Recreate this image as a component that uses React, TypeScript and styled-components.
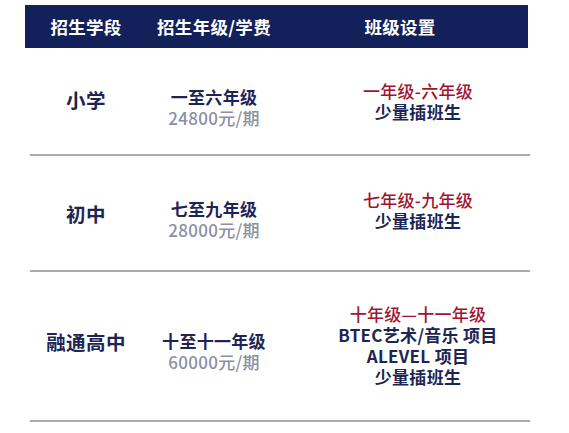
import React from 'react';
import styled, { createGlobalStyle } from 'styled-components';

const colors = {
    navy: '#12215a',
    text: '#1c2553',
    red: '#a01432',
    gray: '#8a8fa5',
    rule: '#a9a9b0',
};

const GlobalStyle = createGlobalStyle`
    body {
        margin: 0;
        background: #ffffff;
        font-family: "Noto Sans CJK SC", "Noto Sans", sans-serif;
    }
`;

const Page = styled.div`
    width: 569px;
    height: 433px;
    padding-top: 5px;
    box-sizing: border-box;
    overflow: hidden;
`;

const grid = `
    display: grid;
    grid-template-columns: 122px 134px 247px;
    margin-left: 25px;
    width: 503px;
`;

const HeaderBar = styled.div`
    ${grid}
    height: 43px;
    align-items: center;
    background: ${colors.navy};
    color: #ffffff;
    font-size: 17.5px;
    letter-spacing: 0.3px;
    font-weight: 700;
`;

const HeaderCell = styled.div<{ $trim?: number }>`
    text-align: center;
    padding-right: ${p => p.$trim || 0}px;
    padding-bottom: 1px;
`;

const Row = styled.div<{ $height: number }>`
    ${grid}
    height: ${p => p.$height}px;
    align-items: center;
`;

const Divider = styled.div`
    margin-left: 30px;
    width: 500px;
    height: 2px;
    background: ${colors.rule};
`;

const StageCell = styled.div<{ $lift: number }>`
    text-align: center;
    font-size: 19.5px;
    letter-spacing: 0.4px;
    font-weight: 700;
    color: ${colors.text};
    padding-bottom: ${p => p.$lift}px;
`;

const GradeCell = styled.div<{ $drop: number }>`
    display: flex;
    flex-direction: column;
    align-items: center;
    padding-top: ${p => p.$drop}px;
    font-size: 17px;
    letter-spacing: 0.3px;
    line-height: 21px;
    font-weight: 700;
    color: ${colors.text};
`;

const Fee = styled.span`
    color: ${colors.gray};
    font-weight: 500;
`;

const ClassCell = styled.div<{ $lift: number }>`
    display: flex;
    flex-direction: column;
    align-items: center;
    padding-left: 27px;
    padding-bottom: ${p => p.$lift}px;
    font-size: 17px;
    letter-spacing: 0.3px;
    line-height: 21px;
    font-weight: 700;
    color: ${colors.text};
`;

const RedLine = styled.span`
    color: ${colors.red};
    font-weight: 500;
`;

type Stage = {
    name: string;
    grades: string;
    fee: string;
    range: string;
    extra: string[];
    height: number;
    stageLift: number;
    gradeDrop: number;
    classLift: number;
};

const stages: Stage[] = [
    {
        name: '小学',
        grades: '一至六年级',
        fee: '24800元/期',
        range: '一年级-六年级',
        extra: ['少量插班生'],
        height: 106,
        stageLift: 4,
        gradeDrop: 12,
        classLift: 0,
    },
    {
        name: '初中',
        grades: '七至九年级',
        fee: '28000元/期',
        range: '七年级-九年级',
        extra: ['少量插班生'],
        height: 114,
        stageLift: 0,
        gradeDrop: 12,
        classLift: 6,
    },
    {
        name: '融通高中',
        grades: '十至十一年级',
        fee: '60000元/期',
        range: '十年级—十一年级',
        extra: ['BTEC艺术/音乐 项目', 'ALEVEL 项目', '少量插班生'],
        height: 148,
        stageLift: 10,
        gradeDrop: 10,
        classLift: 2,
    },
];

const App = () => {
    return (
        <Page>
            <GlobalStyle />
            <HeaderBar>
                <HeaderCell>招生学段</HeaderCell>
                <HeaderCell>招生年级/学费</HeaderCell>
                <HeaderCell $trim={9}>班级设置</HeaderCell>
            </HeaderBar>
            {stages.map(s => (
                <React.Fragment key={s.name}>
                    <Row $height={s.height}>
                        <StageCell $lift={s.stageLift}>{s.name}</StageCell>
                        <GradeCell $drop={s.gradeDrop}>
                            <span>{s.grades}</span>
                            <Fee>{s.fee}</Fee>
                        </GradeCell>
                        <ClassCell $lift={s.classLift}>
                            <RedLine>{s.range}</RedLine>
                            {s.extra.map(line => (
                                <span key={line}>{line}</span>
                            ))}
                        </ClassCell>
                    </Row>
                    <Divider />
                </React.Fragment>
            ))}
        </Page>
    );
};

export default App;
